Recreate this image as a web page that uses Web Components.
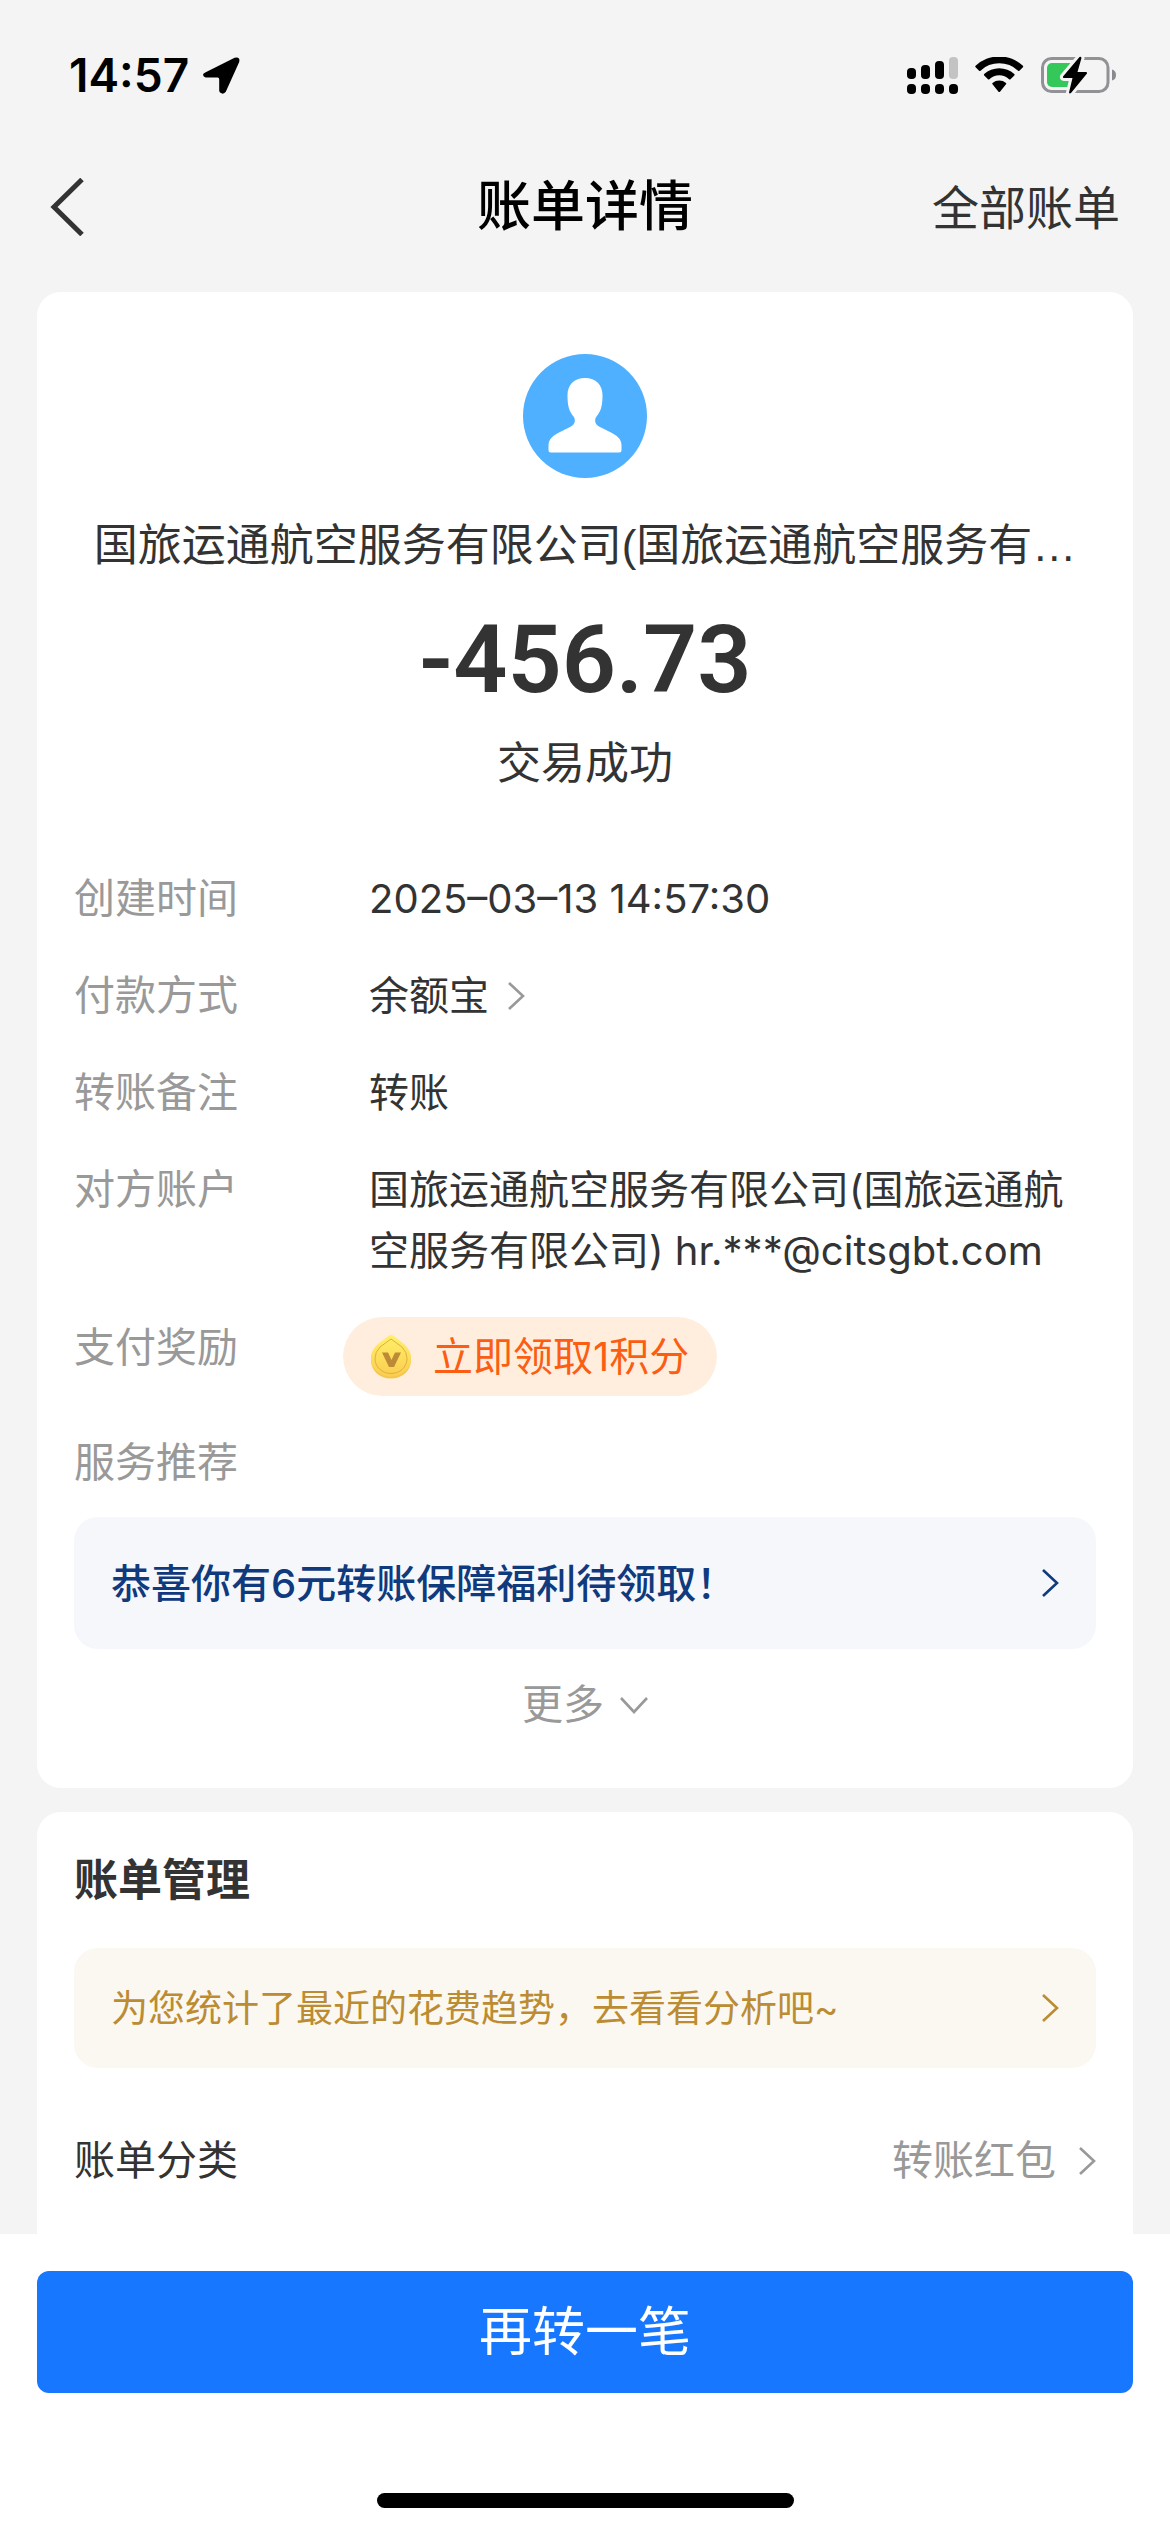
<!DOCTYPE html>
<html lang="zh-CN">
<head>
<meta charset="utf-8">
<meta name="viewport" content="width=device-width, initial-scale=1">
<title>账单详情</title>
<style>
  body {
    margin: 0;
    background: #f4f4f4;
    color: #333;
    font-family: Inter, "Noto Sans CJK SC", sans-serif;
    font-size: 41px;
    line-height: 61px;
  }
</style>
</head>
<body>
<bill-page></bill-page>

<script>
const define = (name, html) => {
  const template = document.createElement('template');
  template.innerHTML = html;
  customElements.define(name, class extends HTMLElement {
    constructor() {
      super();
      this.attachShadow({ mode: 'open' }).append(template.content.cloneNode(true));
    }
    connectedCallback() {
      // copy plain attributes into the places that ask for them
      for (const node of this.shadowRoot.querySelectorAll('[data-text]')) {
        node.textContent = this.getAttribute(node.dataset.text) || '';
      }
    }
  });
};

/* thin arrow, coloured by the surrounding text */
define('chevron-icon', `
  <style>
    :host { display: block; flex: none; width: 18px; height: 28px; }
    :host([down]) { width: 28px; height: 18px; }
    svg { display: block; width: 100%; height: 100%; fill: none; stroke: currentColor; stroke-width: 2.6; }
    .down, :host([down]) .right { display: none; }
    :host([down]) .down { display: block; }
  </style>
  <svg class="right" viewBox="0 0 18 28" aria-hidden="true"><path d="M2 1 16 14 2 27"/></svg>
  <svg class="down" viewBox="0 0 28 18" aria-hidden="true"><path d="M1 2 14 16 27 2"/></svg>
`);

define('status-bar', `
  <style>
    :host { display: flex; align-items: center; justify-content: space-between; height: 150px; padding: 0 54px 0 69px; color: #000; }
    .group { display: flex; align-items: center; gap: 17px; }
    .clock { gap: 14px; font-size: 46px; font-weight: 600; }
    svg { display: block; }
  </style>
  <div class="group clock">
    <span>14:57</span>
    <svg width="37" height="37" viewBox="0 0 37 37" aria-hidden="true"><path d="M2.2 15.6 31.6.8Q37.4-.8 36.2 5L22.8 34.8Q20.6 38 17 35.6L16.2 34V22.200Q16.200 20.600 14.600 20.600H2.800Q-.8 19.600.4 16.800Z"/></svg>
  </div>
  <div class="group">
    <svg width="51" height="37" viewBox="0 0 51 37" aria-hidden="true">
      <rect x="0" y="11" width="9" height="11" rx="4"/><rect x="14" y="8" width="9" height="14" rx="4"/>
      <rect x="28" y="4" width="9" height="18" rx="4"/><rect x="42" y="0" width="9" height="22" rx="4" fill="#c3c3c3"/>
      <rect x="0" y="27" width="9" height="10" rx="4"/><rect x="14" y="27" width="9" height="10" rx="4"/>
      <rect x="28" y="27" width="9" height="10" rx="4"/><rect x="42" y="27" width="9" height="10" rx="4"/>
    </svg>
    <svg width="49" height="36" viewBox="0 0 49 36" aria-hidden="true">
      <path d="M.6 10.200Q-.1 9.500.6 8.800A34.500 34.500 0 0 1 47.900 8.800Q48.600 9.500 47.900 10.200L44.400 13.700Q43.700 14.400 43 13.700A27 27 0 0 0 5.500 13.700Q4.800 14.400 4.100 13.700Z"/>
      <path d="M9.200 18.500Q8.500 17.800 9.200 17.100A22 22 0 0 1 39.300 17.100Q40 17.800 39.300 18.500L35.500 22.200Q34.800 22.900 34.100 22.200A14.500 14.500 0 0 0 14.400 22.200Q13.700 22.900 13 22.200Z"/>
      <path d="M17.500 27.300Q16.800 26.600 17.500 25.900A10.400 10.400 0 0 1 31 25.900Q31.700 26.600 31 27.300L25 34.700Q24.200 35.500 23.500 34.700Z"/>
    </svg>
    <svg width="75" height="38" viewBox="0 0 75 38" aria-hidden="true">
      <rect x="1.500" y="2.500" width="65.500" height="33" rx="9" fill="none" stroke="#919196" stroke-width="3"/>
      <rect x="6" y="7" width="27" height="24" rx="5" fill="#34c759"/>
      <path d="M71 13.500Q75 14.500 75 19T71 24.500Z" fill="#8a8a8e"/>
      <path d="M38.500 1 22 20.500Q21.500 22 23 22H31.500L28 36.500Q28.500 38 30 37L46 17.500Q46.500 16 45 16H36.500L40.500 2Q40 .2 38.500 1Z" stroke="#f4f4f4" stroke-width="6" paint-order="stroke"/>
    </svg>
  </div>
`);

define('nav-bar', `
  <style>
    :host { display: grid; grid-template-columns: 1fr auto 1fr; align-items: center; height: 114px; padding: 0 50px; }
    button { justify-self: start; margin: 0; padding: 0; border: 0; background: none; color: #333; cursor: pointer; }
    button svg { display: block; }
    h1 { margin: 0; color: #000; font-size: 54px; font-weight: 500; line-height: 76px; }
    a { justify-self: end; color: #333; font-size: 47px; text-decoration: none; }
  </style>
  <button type="button" aria-label="返回">
    <svg width="35" height="58" viewBox="0 0 35 58" fill="none" stroke="currentColor" stroke-width="5"><path d="M32 1.500 4 29 32 56.500"/></svg>
  </button>
  <h1><slot></slot></h1>
  <a href="#all"><slot name="action"></slot></a>
`);

define('bill-card', `
  <style>
    :host { display: block; box-sizing: border-box; padding: 0 37px 53px; border-radius: 24px; background: #fff; }
  </style>
  <slot></slot>
`);

define('payee-summary', `
  <style>
    :host { display: flex; flex-direction: column; align-items: center; padding: 62px 0 72px; text-align: center; }
    svg { display: block; }
    .name, .state { font-family: "Liberation Sans", "Noto Sans CJK SC", sans-serif; font-size: 44px; line-height: 64px; white-space: nowrap; }
    .name { margin-top: 36px; }
    .amount { margin: 22px 0 12px; font-family: Roboto, sans-serif; font-size: 95px; font-weight: 600; line-height: 120px; }
  </style>
  <svg width="124" height="124" viewBox="0 0 124 124" aria-hidden="true">
    <circle cx="62" cy="62" r="62" fill="#4fb0ff"/>
    <path d="M62 24C73 24 79.500 31 79.500 41C79.500 52 78 57 73.500 62.500C71 66 72 70 76 72.500L89 79Q98.500 84 98.500 91V96Q98.500 98.500 96 98.500H28Q25.500 98.500 25.500 96V91Q25.500 84 35 79L48 72.500C52 70 53 66 50.500 62.500C46 57 44.500 52 44.500 41C44.500 31 51 24 62 24Z" fill="#fff"/>
  </svg>
  <div class="name"><slot name="name"></slot></div>
  <div class="amount"><slot name="amount"></slot></div>
  <div class="state"><slot name="state"></slot></div>
`);

define('detail-row', `
  <style>
    :host { display: grid; grid-template-columns: 295px 1fr; align-items: start; margin-bottom: 36px; }
    .label { color: #999; }
    .value { display: flex; align-items: center; gap: 18px; font-size: 40px; }
    ::slotted(chevron-icon) { color: #999; }
  </style>
  <div class="label" data-text="label"></div>
  <div class="value"><slot></slot></div>
`);

define('reward-button', `
  <style>
    :host { display: block; margin-left: -26px; }
    button { display: flex; align-items: center; gap: 22px; height: 79px; margin: 0; padding: 0 28px; border: 0; border-radius: 40px; background: #ffeede; color: #fb5e12; font: inherit; cursor: pointer; }
    svg { display: block; }
  </style>
  <button type="button">
    <svg width="40" height="44" viewBox="0 0 40 44" aria-hidden="true">
      <defs><linearGradient id="coin" x1="0" y1="0" x2="0" y2="1"><stop offset="0" stop-color="#fff06a"/><stop offset="1" stop-color="#fbcd50"/></linearGradient></defs>
      <path d="M20 1Q22 1 24 3L33 10Q40 16 40 25C40 36 31 43.500 20 43.500S0 36 0 25Q0 16 7 10L16 3Q18 1 20 1Z" fill="#f3c64c"/>
      <path d="M20 0Q22 0 24 2L33 9Q40 15 40 23.500C40 34 31 41.500 20 41.500S0 34 0 23.500Q0 15 7 9L16 2Q18 0 20 0Z" fill="url(#coin)"/>
      <path d="M20 4 31 12Q36 17 36 23.500C36 32 29 38.500 20 38.500S4 32 4 23.500Q4 17 9 12Z" fill="none" stroke="#e0b03a"/>
      <path d="M11 17.500H17L20.500 25 24 17.500H30L23 32H18Z" fill="#bd8a35"/>
    </svg>
    <slot></slot>
  </button>
`);

define('notice-link', `
  <style>
    :host { display: block; }
    a { display: flex; align-items: center; justify-content: space-between; box-sizing: border-box; min-height: 132px; padding: 0 37px; border-radius: 24px; background: #f5f7fb; color: #0f3a7d; font-size: 40px; font-weight: 500; text-decoration: none; }
    :host([gold]) a { min-height: 120px; background: #fbf8f1; color: #bb8c32; font-size: 37px; font-weight: 400; }
  </style>
  <a href="#notice"><span><slot></slot></span><chevron-icon></chevron-icon></a>
`);

define('more-button', `
  <style>
    :host { display: flex; justify-content: center; margin-top: 25px; }
    button { display: flex; align-items: center; gap: 16px; margin: 0; padding: 0; border: 0; background: none; color: #999; font: inherit; cursor: pointer; }
  </style>
  <button type="button"><slot></slot><chevron-icon down></chevron-icon></button>
`);

define('setting-link', `
  <style>
    :host { display: block; margin-top: 62px; }
    a { display: flex; align-items: center; justify-content: space-between; color: inherit; text-decoration: none; }
    .value { display: flex; align-items: center; gap: 22px; color: #999; }
  </style>
  <a href="#category"><span data-text="label"></span><span class="value"><slot></slot><chevron-icon></chevron-icon></span></a>
`);

define('action-footer', `
  <style>
    :host { display: flex; flex-direction: column; align-items: center; gap: 100px; position: sticky; bottom: 0; box-sizing: border-box; padding: 37px 37px 24px; background: #fff; }
    button { width: 100%; height: 122px; margin: 0; border: 0; border-radius: 12px; background: #1777ff; color: #fff; font: inherit; font-size: 53px; cursor: pointer; }
    .home { width: 417px; height: 15px; border-radius: 8px; background: #000; }
  </style>
  <button type="button"><slot></slot></button>
  <div class="home"></div>
`);

define('bill-page', `
  <style>
    :host { display: flex; flex-direction: column; min-height: 100vh; }
    main { display: flex; flex: 1; flex-direction: column; gap: 24px; padding: 28px 37px 0; }
    .manage { flex: 1; border-radius: 24px 24px 0 0; padding-bottom: 36px; }
    h2 { margin: 0; padding: 36px 0; font-size: 44px; font-weight: 700; line-height: 64px; }
    .last { margin-bottom: 24px; }
  </style>
  <status-bar></status-bar>
  <nav-bar>账单详情<span slot="action">全部账单</span></nav-bar>
  <main>
    <bill-card>
      <payee-summary>
        <span slot="name">国旅运通航空服务有限公司(国旅运通航空服务有…</span>
        <span slot="amount">-456.73</span>
        <span slot="state">交易成功</span>
      </payee-summary>
      <detail-row label="创建时间">2025–03–13 14:57:30</detail-row>
      <detail-row label="付款方式">余额宝<chevron-icon></chevron-icon></detail-row>
      <detail-row label="转账备注">转账</detail-row>
      <detail-row label="对方账户">国旅运通航空服务有限公司(国旅运通航空服务有限公司) hr.***@citsgbt.com</detail-row>
      <detail-row label="支付奖励"><reward-button>立即领取1积分</reward-button></detail-row>
      <detail-row class="last" label="服务推荐"></detail-row>
      <notice-link>恭喜你有6元转账保障福利待领取！</notice-link>
      <more-button>更多</more-button>
    </bill-card>
    <bill-card class="manage">
      <h2>账单管理</h2>
      <notice-link gold>为您统计了最近的花费趋势，去看看分析吧~</notice-link>
      <setting-link label="账单分类">转账红包</setting-link>
    </bill-card>
  </main>
  <action-footer>再转一笔</action-footer>
`);
</script>
</body>
</html>
